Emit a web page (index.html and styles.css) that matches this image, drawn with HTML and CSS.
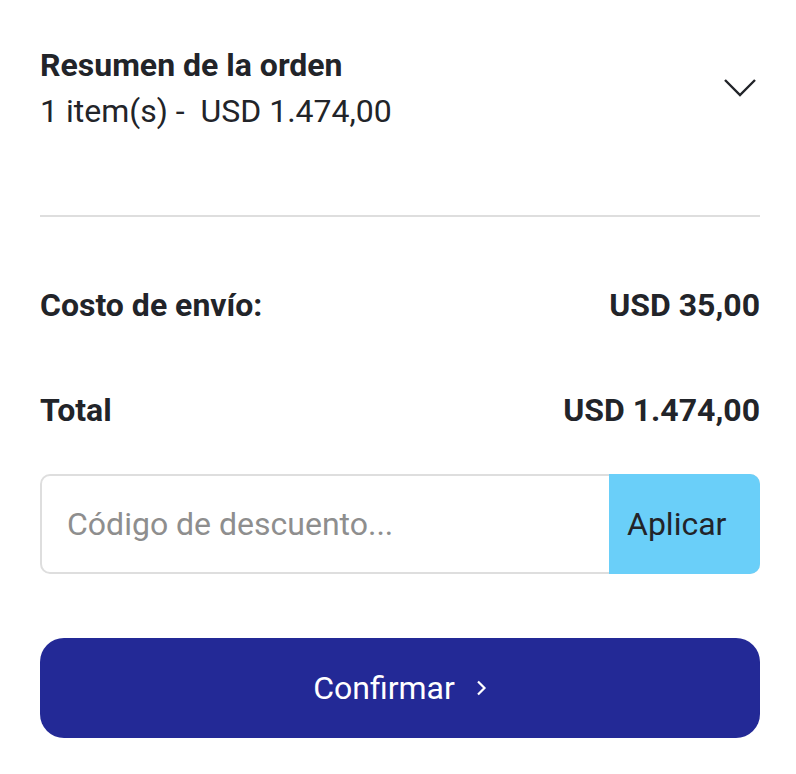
FILE: index.html
```html
<!DOCTYPE html>
<html lang="es">
<head>
    <meta charset="UTF-8">
    <meta name="viewport" content="width=device-width, initial-scale=1.0">
    <title>Resumen de la orden</title>
    <link rel="stylesheet" href="styles.css">
</head>
<body>

    <div class="summary">
        <div class="summary-head">
            <div>
                <h2 class="summary-title">Resumen de la orden</h2>
                <p class="summary-sub">1 item(s) - &nbsp;USD 1.474,00</p>
            </div>
            <svg class="chevron" width="34" height="20" viewBox="0 0 34 20">
                <path d="M2 2 L17 17 L32 2" fill="none" stroke="#222429" stroke-width="2.4"/>
            </svg>
        </div>

        <hr class="divider">

        <div class="totals">
            <div class="row">
                <span>Costo de envío:</span>
                <span>USD 35,00</span>
            </div>
            <div class="row">
                <span>Total</span>
                <span>USD 1.474,00</span>
            </div>
        </div>

        <div class="coupon">
            <input class="coupon-input" type="text" placeholder="Código de descuento...">
            <button class="coupon-btn">Aplicar</button>
        </div>

        <button class="confirm">
            Confirmar
            <svg width="12" height="18" viewBox="0 0 12 18">
                <path d="M3 2.5 L9.5 9 L3 15.5" fill="none" stroke="#fff" stroke-width="2.2"/>
            </svg>
        </button>
    </div>

</body>
</html>
```

FILE: styles.css
```css
body {
    margin: 0;
    font-family: Roboto, "Liberation Sans", sans-serif;
    color: #222429;
    background: #fff;
}
.summary {
    padding: 45px 36px 36px 40px;
}
.summary-head {
    display: flex;
    justify-content: space-between;
    align-items: center;
}
.summary-title {
    margin: 0;
    font-size: 32px;
    font-weight: 700;
    line-height: 40px;
}
.summary-sub {
    margin: 6px 0 0;
    font-size: 32px;
    line-height: 40px;
}
.chevron {
    margin-right: 3px;
}
.divider {
    border: none;
    border-top: 2px solid #dedede;
    margin: 84px 0 0;
}
.totals {
    display: flex;
    flex-direction: column;
    gap: 65px;
    margin-top: 68px;
}
.row {
    display: flex;
    justify-content: space-between;
    font-size: 32px;
    font-weight: 700;
    line-height: 40px;
}
.coupon {
    display: flex;
    margin-top: 44px;
    height: 100px;
    border: 2px solid #dedede;
    border-radius: 10px;
    box-sizing: border-box;
}
.coupon-input {
    flex: 1;
    min-width: 0;
    border: none;
    outline: none;
    background: transparent;
    padding: 0 25px;
    font-family: inherit;
    font-size: 32px;
    color: #222429;
}
.coupon-input::placeholder {
    color: #8e8e8e;
}
.coupon-btn {
    width: 151px;
    margin: -2px -2px -2px 0;
    padding: 0 0 0 18px;
    text-align: left;
    border: none;
    border-radius: 0 10px 10px 0;
    background: #6acff9;
    font-family: inherit;
    font-size: 32px;
    color: #222429;
    cursor: pointer;
}
.confirm {
    display: flex;
    justify-content: center;
    align-items: center;
    gap: 20px;
    width: 100%;
    height: 100px;
    margin-top: 64px;
    border: none;
    border-radius: 24px;
    background: #232996;
    color: #fff;
    font-family: inherit;
    font-size: 32px;
    cursor: pointer;
}
```
